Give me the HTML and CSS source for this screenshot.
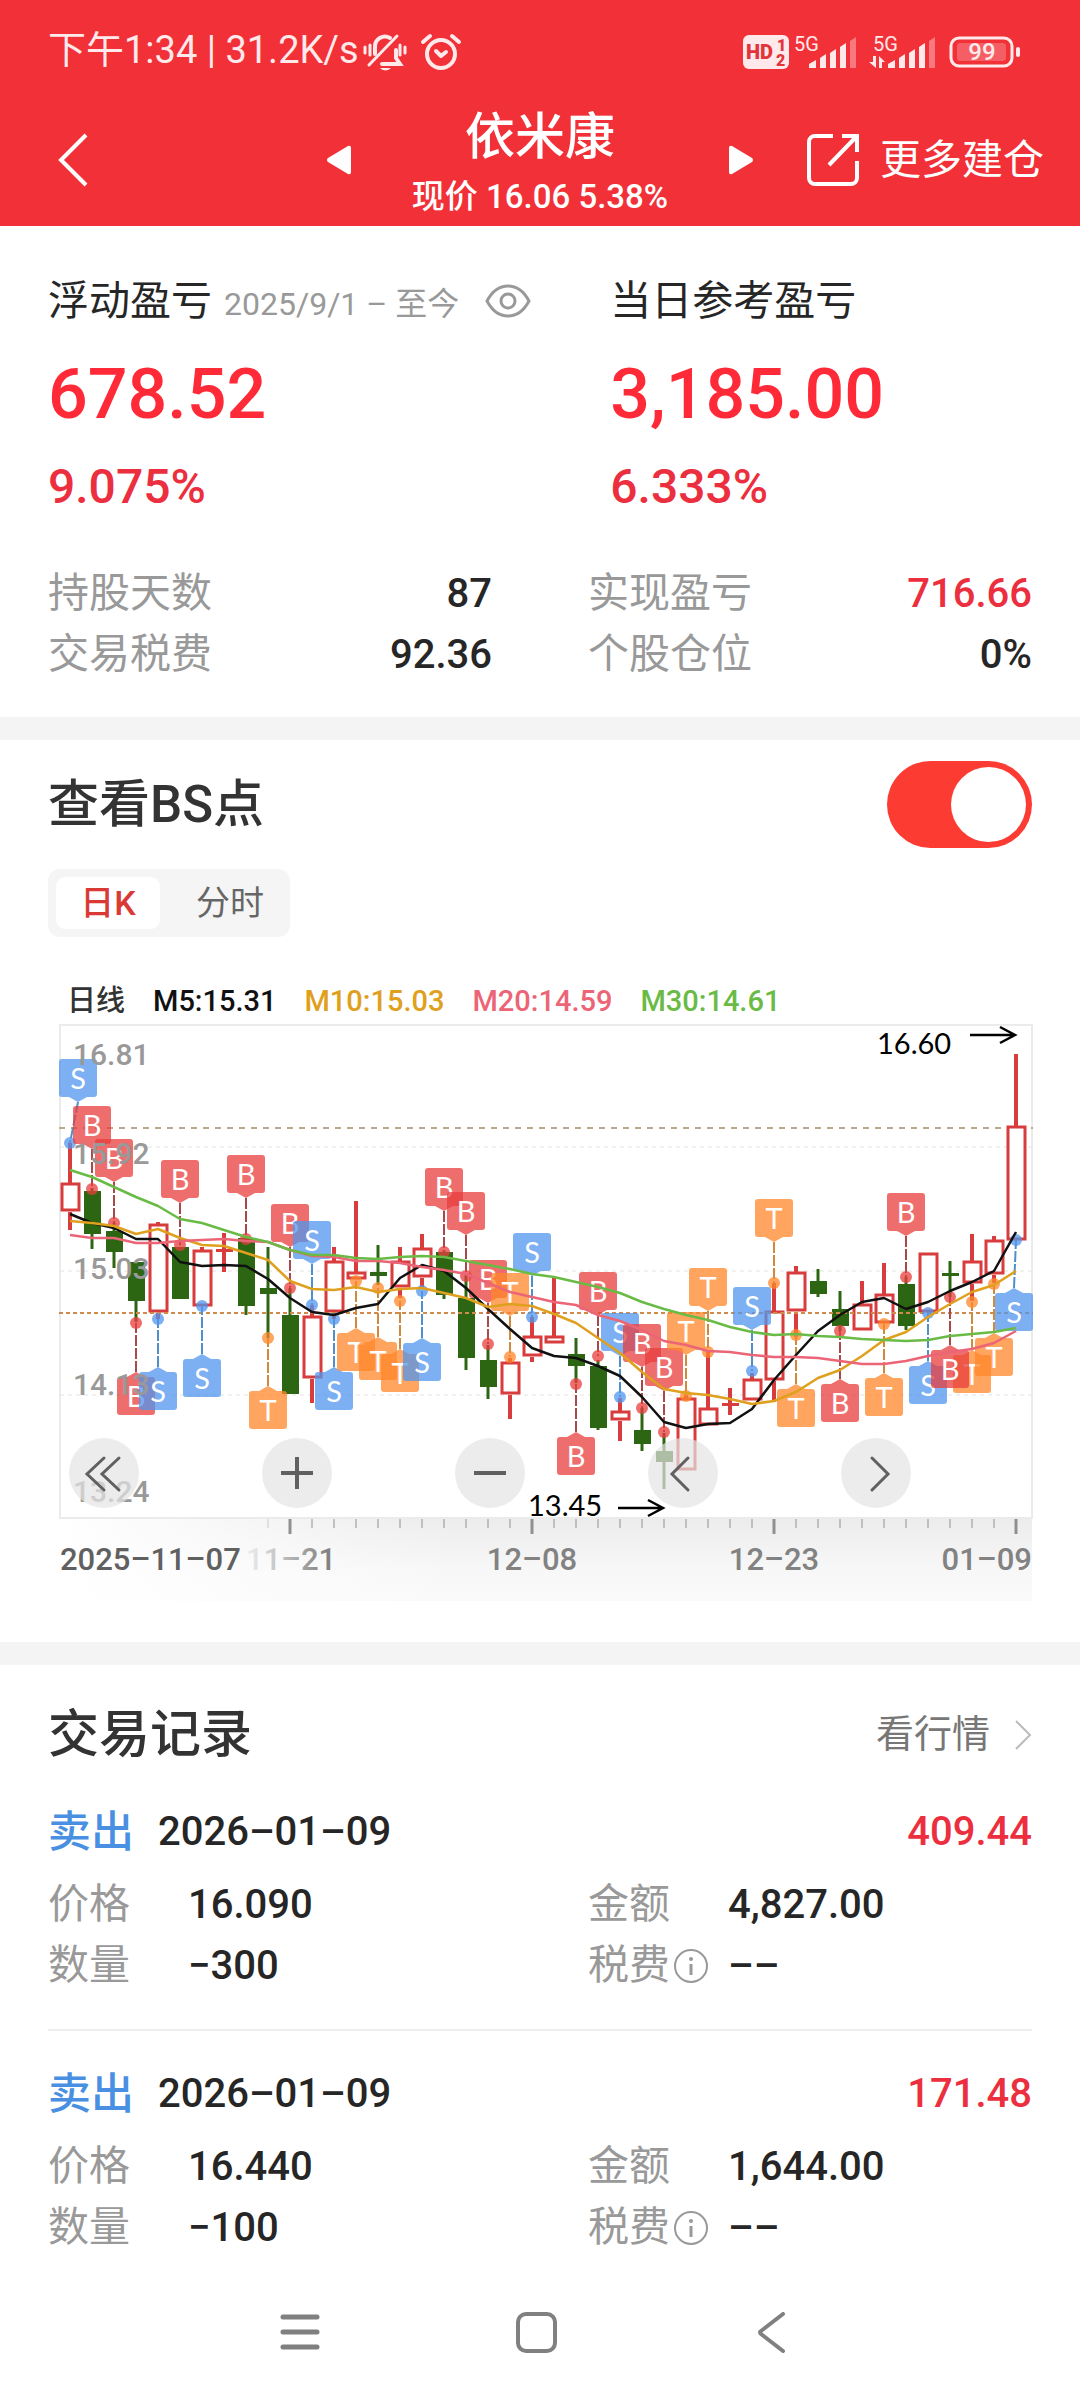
FILE: index.html
```html
<!DOCTYPE html>
<html lang="zh-CN">
<head>
<meta charset="utf-8">
<meta name="viewport" content="width=device-width, initial-scale=1">
<title>依米康</title>
<link rel="stylesheet" href="styles.css">
</head>
<body>
<header class="top">
  <div class="status">
    <div class="status-left">
      <span class="clock">下午1:34 | 31.2K/s</span>
      <svg class="ic-mute" viewBox="0 0 44 38" fill="none" stroke="currentColor" stroke-width="4" stroke-linecap="round">
        <path d="M2 14v6M7 12v10M42 14v6M37 12v10" stroke-width="3"/>
        <path d="M12 21V14a10 10 0 0 1 15-9M33 17v8l4 6H19"/>
        <path d="M6 32 34 3" stroke-width="3"/>
        <path d="M17 35h11a6 4 0 0 1-11 0z" fill="currentColor" stroke="none"/>
      </svg>
      <svg class="ic-alarm" viewBox="0 0 40 38" fill="none" stroke="currentColor" stroke-width="4" stroke-linecap="round" stroke-linejoin="round">
        <circle cx="20" cy="21" r="14"/><path d="m15 18 5 5 5-4M2 9l7-6M38 9l-7-6"/>
      </svg>
    </div>
    <div class="status-right">
      <svg class="ic-hd" viewBox="0 0 46 36">
        <rect y="1" width="46" height="34" rx="6" fill="currentColor"/>
        <g class="hd-text"><text x="3" y="25" font-size="20">HD</text><text x="34" y="17" font-size="16">1</text><text x="33" y="32" font-size="16">2</text></g>
      </svg>
      <svg class="ic-signal" viewBox="0 0 63 36">
        <text class="net-text" x="0" y="17">5G</text>
        <path fill="currentColor" d="M15 30l7-4v8h-7zM26 24l6-4v14h-6zM36 19l6-4v19h-6zM46 13l6-4v25h-6z"/><path fill="currentColor" opacity=".4" d="M56 7l6-4v31h-6z"/>
      </svg>
      <svg class="ic-signal ic-data" viewBox="0 0 67 36">
        <text class="net-text" x="4" y="17">5G</text>
        <path fill="currentColor" d="M4 22h3v12L0 28h4zM10 34V22l6 6h-3v6z"/>
        <path fill="currentColor" d="M19 30l7-4v8h-7zM30 24l6-4v14h-6zM40 19l6-4v19h-6zM50 13l6-4v25h-6z"/><path fill="currentColor" opacity=".4" d="M60 7l6-4v31h-6z"/>
      </svg>
      <svg class="ic-battery" viewBox="0 0 70 36">
        <rect x="1" y="4" width="61" height="28" rx="8" fill="none" stroke="currentColor" stroke-width="3"/>
        <rect x="7" y="9" width="49" height="18" rx="3" fill="currentColor" opacity=".25"/>
        <rect x="66" y="13" width="4" height="10" rx="2" fill="currentColor"/>
        <text class="bat-text" x="32" y="26" text-anchor="middle">99</text>
      </svg>
    </div>
  </div>
  <nav class="nav">
    <button class="plain back" aria-label="返回"><svg viewBox="0 0 30 54" fill="none" stroke="currentColor" stroke-width="4"><path d="M28 2 3 27l25 25"/></svg></button>
    <div class="switcher">
      <button class="plain tri" aria-label="上一只"><svg viewBox="0 0 24 30" fill="currentColor"><path d="M21 1 1 13q-2 2 0 4l20 12q3 1 3-2V3q0-3-3-2z"/></svg></button>
      <div class="stock"><h1>依米康</h1><p>现价 16.06 5.38%</p></div>
      <button class="plain tri" aria-label="下一只"><svg viewBox="0 0 24 30" fill="currentColor"><path d="m3 1 20 12q2 2 0 4L3 29q-3 1-3-2V3q0-3 3-2z"/></svg></button>
    </div>
    <button class="plain more"><svg viewBox="0 0 54 54" fill="none" stroke="currentColor" stroke-width="4"><path d="M27 3H9a6 6 0 0 0-6 6v36a6 6 0 0 0 6 6h36a6 6 0 0 0 6-6V28M36 3h15v16M50 4 23 32"/></svg>更多建仓</button>
  </nav>
</header>

<main>
  <section class="card summary">
    <div class="profit">
      <div>
        <div class="cap"><h2>浮动盈亏</h2><span class="range">2025/9/1 – 至今</span>
          <button class="plain eye" aria-label="隐藏金额"><svg viewBox="0 0 46 34" fill="none" stroke="currentColor" stroke-width="3"><path d="M2 17Q10 2 23 2t21 15Q36 32 23 32T2 17z"/><circle cx="23" cy="17" r="7"/></svg></button></div>
        <p class="amount">678.52</p><p class="rate">9.075%</p>
      </div>
      <div>
        <div class="cap"><h2>当日参考盈亏</h2></div>
        <p class="amount">3,185.00</p><p class="rate">6.333%</p>
      </div>
    </div>
    <dl class="facts">
      <div><dt>持股天数</dt><dd>87</dd></div>
      <div><dt>实现盈亏</dt><dd class="up">716.66</dd></div>
      <div><dt>交易税费</dt><dd>92.36</dd></div>
      <div><dt>个股仓位</dt><dd>0%</dd></div>
    </dl>
  </section>

  <section class="card chart-card">
    <div class="row"><h2 class="title"><label for="bs">查看BS点</label></h2><input class="toggle" type="checkbox" id="bs" checked></div>
    <div class="tabs" role="tablist"><button class="tab on" role="tab" aria-selected="true">日K</button><button class="tab" role="tab" aria-selected="false">分时</button></div>
    <div class="legend"><span class="l0">日线</span><span class="l5">M5:15.31</span><span class="l10">M10:15.03</span><span class="l20">M20:14.59</span><span class="l30">M30:14.61</span></div>
    <div class="chart">
      <svg id="kline" viewBox="48 1022 984 579" role="img" aria-label="日K线图"></svg>
      <div class="tools">
        <button aria-label="最早"><svg viewBox="0 0 70 70"><path d="M35 20 18 36l17 16M50 20 33 36l17 16"/></svg></button>
        <button aria-label="放大"><svg viewBox="0 0 70 70"><path class="fat" d="M19 35h32M35 19v32"/></svg></button>
        <button aria-label="缩小"><svg viewBox="0 0 70 70"><path class="fat" d="M19 35h32"/></svg></button>
        <button aria-label="向左"><svg viewBox="0 0 70 70"><path d="M40 20 24 36l16 16"/></svg></button>
        <button aria-label="向右"><svg viewBox="0 0 70 70"><path d="m31 20 16 16-16 16"/></svg></button>
      </div>
    </div>
  </section>

  <section class="card records">
    <div class="row"><h2 class="title">交易记录</h2><a class="quote" href="#"><span>看行情</span><svg viewBox="0 0 18 32" fill="none" stroke="currentColor" stroke-width="2"><path d="m2 2 14 14L2 30"/></svg></a></div>
    <article class="record">
      <div class="rec-head"><span class="side">卖出</span><time>2026–01–09</time><span class="gain">409.44</span></div>
      <dl class="detail">
        <div><dt>价格</dt><dd>16.090</dd></div><div><dt>金额</dt><dd>4,827.00</dd></div>
        <div><dt>数量</dt><dd>−300</dd></div>
        <div><dt>税费<button class="plain info" aria-label="税费说明"><svg viewBox="0 0 36 36" fill="none" stroke="currentColor" stroke-width="2"><circle cx="18" cy="18" r="16"/><path d="M18 16v11" stroke-width="3"/><circle cx="18" cy="11" r="2" fill="currentColor" stroke="none"/></svg></button></dt><dd>––</dd></div>
      </dl>
    </article>
    <article class="record">
      <div class="rec-head"><span class="side">卖出</span><time>2026–01–09</time><span class="gain">171.48</span></div>
      <dl class="detail">
        <div><dt>价格</dt><dd>16.440</dd></div><div><dt>金额</dt><dd>1,644.00</dd></div>
        <div><dt>数量</dt><dd>−100</dd></div>
        <div><dt>税费<button class="plain info" aria-label="税费说明"><svg viewBox="0 0 36 36" fill="none" stroke="currentColor" stroke-width="2"><circle cx="18" cy="18" r="16"/><path d="M18 16v11" stroke-width="3"/><circle cx="18" cy="11" r="2" fill="currentColor" stroke="none"/></svg></button></dt><dd>––</dd></div>
      </dl>
    </article>
  </section>
</main>

<footer class="sysnav">
  <button class="plain" aria-label="最近任务"><svg viewBox="0 0 42 42" fill="none" stroke="currentColor" stroke-width="5" stroke-linecap="round"><path d="M4 5h34M4 20h34M4 35h34"/></svg></button>
  <button class="plain" aria-label="主屏幕"><svg viewBox="0 0 42 42" fill="none" stroke="currentColor" stroke-width="4"><rect x="3" y="2" width="37" height="37" rx="8"/></svg></button>
  <button class="plain" aria-label="后退"><svg viewBox="0 0 42 42" fill="none" stroke="currentColor" stroke-width="4" stroke-linecap="round" stroke-linejoin="round"><path d="M32 2 10 19q-2 1 0 3l22 17"/></svg></button>
</footer>
<script src="chart.js"></script>
</body>
</html>
```
FILE: styles.css
```css
* { box-sizing: border-box; }
body {
  margin: 0;
  background: #fff;
  color: #262626;
  font-family: Roboto, "Noto Sans CJK SC", sans-serif;
}
h1, h2, p, dl, dd { margin: 0; }
h2 { font-weight: 400; }
svg { display: block; }
.plain { border: 0; padding: 0; background: none; color: inherit; font: inherit; }

.top { background: #f23037; color: #fff; }
.status {
  display: flex;
  justify-content: space-between;
  height: 94px;
  padding: 10px 60px 0 48px;
  color: #ffe9ea;
}
.status svg { overflow: visible; }
.status-left, .status-right { display: flex; align-items: center; }
.clock { padding-bottom: 4px; font-size: 38px; line-height: 44px; white-space: nowrap; }
.ic-mute { width: 44px; margin-left: 4px; }
.ic-alarm { width: 40px; margin-left: 14px; }
.ic-hd { width: 46px; }
.ic-signal { width: 63px; margin-left: 5px; }
.ic-data { width: 67px; margin-left: 12px; }
.ic-battery { width: 70px; margin-left: 14px; }
.hd-text { fill: #e2353b; font-weight: 900; }
.net-text { fill: currentColor; font-size: 20px; }
.bat-text { fill: currentColor; font-size: 24px; font-weight: 500; }

.nav {
  display: grid;
  grid-template-columns: 1fr 426px 1fr;
  align-items: center;
  height: 132px;
  padding: 0 36px;
}
.back { justify-self: start; padding-left: 22px; }
.back svg { width: 30px; }
.switcher { display: flex; align-items: center; justify-content: space-between; }
.tri svg { width: 24px; }
.stock { padding-top: 4px; text-align: center; }
.stock h1 { font-size: 50px; line-height: 60px; font-weight: 500; }
.stock p { margin-top: 10px; font-size: 33px; line-height: 40px; font-weight: 500; }
.more { display: flex; align-items: center; gap: 20px; justify-self: end; font-size: 41px; line-height: 54px; white-space: nowrap; }
.more svg { width: 54px; }

main { background: #f4f4f4; }
.card { padding: 0 48px; background: #fff; }
.card + .card { margin-top: 23px; }
.row { display: flex; align-items: center; justify-content: space-between; }
.title { font-size: 51px; line-height: 60px; font-weight: 500; color: #333; }

.summary { padding-top: 47px; padding-bottom: 32px; }
.profit { display: grid; grid-template-columns: 4fr 3fr; }
.cap { display: flex; align-items: baseline; height: 56px; line-height: 56px; }
.cap h2 { font-size: 41px; }
.range { margin-left: 12px; color: #999; font-size: 32px; }
.eye { align-self: center; margin-left: 26px; color: #999; }
.eye svg { width: 46px; }
.amount { margin-top: 23px; color: #ff2a38; font-size: 70px; line-height: 84px; font-weight: 500; }
.rate { margin-top: 21px; color: #ec2f3f; font-size: 48px; line-height: 60px; font-weight: 500; }
.facts { display: grid; grid-template-columns: 1fr 1fr; column-gap: 96px; margin-top: 46px; }
.facts div { display: flex; justify-content: space-between; }
.facts div, .detail div { font-size: 41px; line-height: 61px; }
dt { color: #999; }
dd { font-size: 40px; font-weight: 500; }
.up { color: #ec2f3f; }

.chart-card { padding-top: 21px; padding-bottom: 41px; }
.toggle {
  appearance: none;
  width: 145px;
  height: 87px;
  margin: 0;
  padding: 6px;
  border-radius: 44px;
  background: #ccc;
}
.toggle::before { content: ""; display: block; width: 75px; height: 75px; border-radius: 50%; background: #fff; }
.toggle:checked { background: #fc3c32; }
.toggle:checked::before { margin-left: auto; }
.tabs { display: inline-flex; margin-top: 21px; padding: 8px; border-radius: 12px; background: #f5f5f5; vertical-align: top; }
.tab { width: 104px; height: 52px; padding: 0; border: 0; border-radius: 9px; background: none; color: #666; font: 34px/52px Roboto, "Noto Sans CJK SC", sans-serif; }
.tab + .tab { width: 122px; padding-left: 18px; }
.tab.on { background: #fff; color: #d93a36; font-weight: 500; }
.legend { display: flex; gap: 28px; margin-top: 46px; padding-left: 19px; font-size: 29px; line-height: 36px; font-weight: 500; white-space: nowrap; }
.l0 { color: #333; }
.l5 { color: #111; }
.l10 { color: #dfa01e; }
.l20 { color: #ec6577; }
.l30 { color: #6abb46; }
.chart { position: relative; margin-top: 3px; }
.chart > svg { width: 100%; overflow: visible; }
.tools { position: absolute; left: 21px; right: 121px; bottom: 93px; display: flex; justify-content: space-between; }
.tools button { width: 70px; height: 70px; padding: 0; border: 0; border-radius: 50%; background: rgba(228, 228, 228, .7); }
.tools svg { fill: none; stroke: #606060; stroke-width: 3; stroke-linecap: round; }
.tools .fat { stroke-width: 4; stroke-linecap: butt; }

.price, .axis { font-size: 30px; font-weight: 500; fill: #999; }
.axis { font-size: 31px; fill: #828282; }
.axis.first { fill: #606060; }
.mark, .peak { font-family: Lato, "Noto Sans CJK SC", sans-serif; }
.mark { font-size: 29px; fill: #fff; }
.peak { font-size: 29px; fill: #000; }

.records { padding-top: 40px; }
.quote { display: flex; align-items: center; gap: 24px; color: #777; font-size: 38px; line-height: 44px; text-decoration: none; }
.quote span { padding-bottom: 3px; }
.quote svg { width: 18px; color: #bbb; }
.record { padding: 33px 0; }
.row + .record { margin-top: 4px; }
.record + .record { padding-bottom: 0; border-top: 2px solid #eee; }
.rec-head { display: flex; align-items: center; line-height: 60px; font-size: 40px; font-weight: 500; }
.side { color: #4a90e2; font-size: 43px; }
.rec-head time { margin-left: 24px; }
.gain { margin-left: auto; color: #ec2f3f; }
.detail { display: grid; grid-template-columns: 1fr 1fr; column-gap: 96px; margin-top: 12px; }
.detail div { display: flex; }
.detail dt { display: flex; align-items: center; width: 140px; }
.info { margin-left: 3px; }
.info svg { width: 36px; }

.sysnav { display: flex; justify-content: center; height: 143px; padding: 7px 8px 0 0; color: #808080; }
.sysnav button { width: 236px; }
.sysnav svg { width: 42px; margin: 0 auto; }
```
FILE: chart.js
```js
const X = i => 70 + 22 * i;
const UP = '#d83c3c', DOWN = '#2d6613';

// colour, high, body top, body bottom, low
const candles = [
  ['u',1143,1183,1212,1230],['d',1188,1191,1234,1249],['d',1223,1231,1252,1268],['d',1262,1262,1301,1322],
  ['u',1222,1224,1313,1319],['d',1247,1247,1299,1299],['u',1247,1250,1307,1307],['u',1233,1249,1252,1272],
  ['d',1238,1238,1306,1315],['d',1247,1288,1294,1338],['d',1288,1315,1394,1394],['u',1305,1316,1379,1403],
  ['u',1247,1261,1313,1319],['u',1201,1272,1280,1280],['d',1245,1272,1276,1285],['u',1247,1261,1288,1298],
  ['u',1234,1248,1278,1289],['d',1250,1252,1295,1299],['d',1273,1298,1358,1370],['d',1345,1360,1387,1399],
  ['u',1358,1362,1395,1419],['u',1317,1336,1357,1362],['u',1278,1336,1344,1344],['d',1338,1354,1366,1383],
  ['d',1360,1366,1428,1430],['u',1398,1411,1421,1441],['d',1408,1430,1444,1451],['d',1433,1451,1462,1489],
  ['u',1395,1398,1471,1471],['u',1352,1408,1426,1426],['u',1388,1403,1406,1415],['u',1373,1379,1401,1401],
  ['u',1283,1311,1381,1402],['u',1266,1272,1312,1337],['d',1269,1281,1294,1297],['d',1291,1309,1326,1331],
  ['u',1281,1304,1331,1331],['u',1263,1294,1324,1324],['d',1277,1284,1326,1330],['u',1253,1253,1313,1313],
  ['d',1261,1273,1276,1297],['u',1234,1261,1284,1301],['u',1236,1240,1275,1283],['u',1054,1126,1241,1241]
];

const averages = {
  '#111': [1214,1223,1228,1239,1239,1262,1266,1265,1266,1279,1298,1312,1315,1308,1304,1278,1265,1271,1288,1309,1329,1348,1356,1358,1366,1376,1397,1422,1428,1424,1423,1409,1380,1355,1331,1315,1302,1298,1309,1302,1291,1282,1271,1232],
  '#dfa01e': [1221,1223,1226,1234,1229,1238,1245,1246,1253,1260,1281,1289,1290,1287,1292,1289,1288,1293,1298,1307,1304,1306,1314,1323,1338,1353,1372,1389,1393,1395,1399,1404,1401,1392,1378,1370,1356,1340,1332,1317,1304,1292,1285,1271],
  '#ec6577': [1235,1238,1238,1243,1243,1241,1240,1239,1241,1242,1250,1256,1257,1261,1261,1263,1267,1270,1274,1283,1292,1297,1302,1305,1315,1321,1330,1341,1345,1351,1352,1355,1357,1357,1358,1361,1364,1364,1361,1356,1352,1349,1343,1331],
  '#6abb46': [1170,1177,1187,1197,1206,1219,1223,1230,1237,1242,1250,1255,1255,1258,1259,1257,1256,1257,1261,1265,1269,1274,1277,1282,1287,1293,1302,1309,1315,1320,1327,1332,1335,1334,1336,1337,1339,1340,1341,1340,1336,1334,1332,1328]
};

// candle index, kind, top of the flag, height of the dot, optional flag centre
const trades = [
  [0,'S',1059,1143,78],[1,'B',1106,1189],[2,'B',1139,1223],[3,'B',1377,1323],[4,'S',1372,1319],[5,'B',1160,1245],
  [6,'S',1359,1306],[8,'B',1155,1239],[9,'T',1391,1338],[10,'B',1204,1288],[11,'S',1221,1305],[12,'S',1372,1319],
  [13,'T',1333,1281],[14,'T',1342,1288],[15,'T',1354,1301],[16,'S',1343,1291],[17,'B',1168,1252],[18,'B',1192,1276],
  [19,'B',1260,1344],[20,'T',1273,1357],[21,'S',1233,1317],[23,'B',1437,1384],[24,'B',1272,1356],[25,'S',1313,1397],
  [26,'B',1324,1408],[27,'B',1348,1432],[28,'T',1312,1396],[29,'T',1268,1352],[31,'S',1287,1371],[32,'T',1199,1283],
  [33,'T',1389,1335],[35,'B',1384,1331],[37,'T',1378,1324],[38,'B',1193,1277],[39,'S',1366,1313],[41,'T',1355,1302],
  [40,'B',1350,1297],[42,'T',1338,1284],[43,'S',1293,1240,1014]
];
const fills = { B: '#e83e3e', S: '#5096ee', T: '#ff872a' };
const stems = { B: '#a84848', S: '#4f8fca', T: '#d08a3c' };

const line = (x1, y1, x2, y2, c, w, dash = '') =>
  `<line x1="${x1}" y1="${y1}" x2="${x2}" y2="${y2}" stroke="${c}" stroke-width="${w}" stroke-dasharray="${dash}"/>`;
const text = (cls, x, y, s, anchor = 'start', extra = '') =>
  `<text class="${cls}" x="${x}" y="${y}" text-anchor="${anchor}" ${extra}>${s}</text>`;

let out = `<defs>
  <linearGradient id="strip" x2="0" y2="1"><stop offset="0" stop-color="#ececec"/><stop offset=".6" stop-color="#f7f7f7"/><stop offset="1" stop-color="#fafafa"/></linearGradient>
  <linearGradient id="fade"><stop offset="0" stop-color="#fff"/><stop offset="1" stop-color="#fff" stop-opacity="0"/></linearGradient>
  <linearGradient id="dateFade"><stop offset="0" stop-color="#f0f0f0"/><stop offset=".9" stop-color="#828282"/></linearGradient>
</defs>
<rect x="60" y="1518" width="972" height="83" fill="url(#strip)"/>
<rect x="59" y="1518" width="400" height="83" fill="url(#fade)"/>
<rect x="60" y="1025" width="972" height="493" fill="#fff" stroke="#ebebeb" stroke-width="2"/>`;
for (const y of [1147, 1271, 1395]) out += line(60, y, 1032, y, '#e2e2e2', 1, '4 4');
out += line(59, 1128, 1033, 1128, '#b8a98a', 2, '6 6');

candles.forEach(([k, hi, top, bot, lo], i) => {
  const x = X(i), c = k === 'u' ? UP : DOWN, w = k === 'u' ? 4 : 3;
  out += line(x, hi, x, top, c, w) + line(x, bot, x, lo, c, w);
  if (k === 'd' || bot - top < 5) out += `<rect x="${x - 8}" y="${top}" width="17" height="${bot - top}" fill="${c}"/>`;
  else out += `<rect x="${x - 8}" y="${top + 1}" width="17" height="${bot - top - 3}" fill="#fff" stroke="${c}" stroke-width="3"/>`;
});
out += line(59, 1313, 1033, 1313, '#d08a4c', 2, '4 3');

trades.forEach(([i, k, top, dot, cx = X(i)]) => {
  const above = top < dot, edge = above ? top + 38 : top, tip = above ? edge + 5 : edge - 5;
  out += line(cx, tip, X(i), dot, stems[k], 2, '11 2');
  out += `<g fill="${fills[k]}" fill-opacity=".75"><circle cx="${X(i)}" cy="${dot}" r="6"/><rect x="${cx - 19}" y="${top}" width="38" height="38" rx="3"/><path d="M${cx - 9} ${edge}L${cx} ${tip}L${cx + 9} ${edge}z"/></g>`;
  out += text('mark', cx, top + 30, k, 'middle');
});

for (const [c, ys] of Object.entries(averages))
  out += `<polyline fill="none" stroke="${c}" stroke-width="2.5" stroke-linejoin="round" points="${ys.map((y, i) => X(i) + ',' + y).join(' ')}"/>`;

[['16.81', 1065], ['15.92', 1164], ['15.03', 1279], ['14.13', 1395], ['13.24', 1502]]
  .forEach(([s, y]) => out += text('price', 73, y, s));
out += text('peak', 877, 1054, '16.60') + text('peak', 528, 1516, '13.45');
out += `<path d="M970 1035h45M1000 1027l15 8-15 8M618 1508h45M648 1500l15 8-15 8" fill="none" stroke="#000" stroke-width="2.5"/>`;

for (let i = 9; i <= 43; i++) {
  const big = (i - 10) % 11 === 0;
  out += line(X(i), 1519, X(i), big ? 1534 : 1528, i === 9 ? '#ccc' : '#909090', big ? 3 : 1);
}
out += text('axis first', 60, 1570, '2025–11–07')
  + text('axis', 291, 1570, '11–21', 'middle', 'style="fill:url(#dateFade)"')
  + text('axis', 532, 1570, '12–08', 'middle') + text('axis', 774, 1570, '12–23', 'middle')
  + text('axis', 1032, 1570, '01–09', 'end');
document.getElementById('kline').innerHTML = out;
```
